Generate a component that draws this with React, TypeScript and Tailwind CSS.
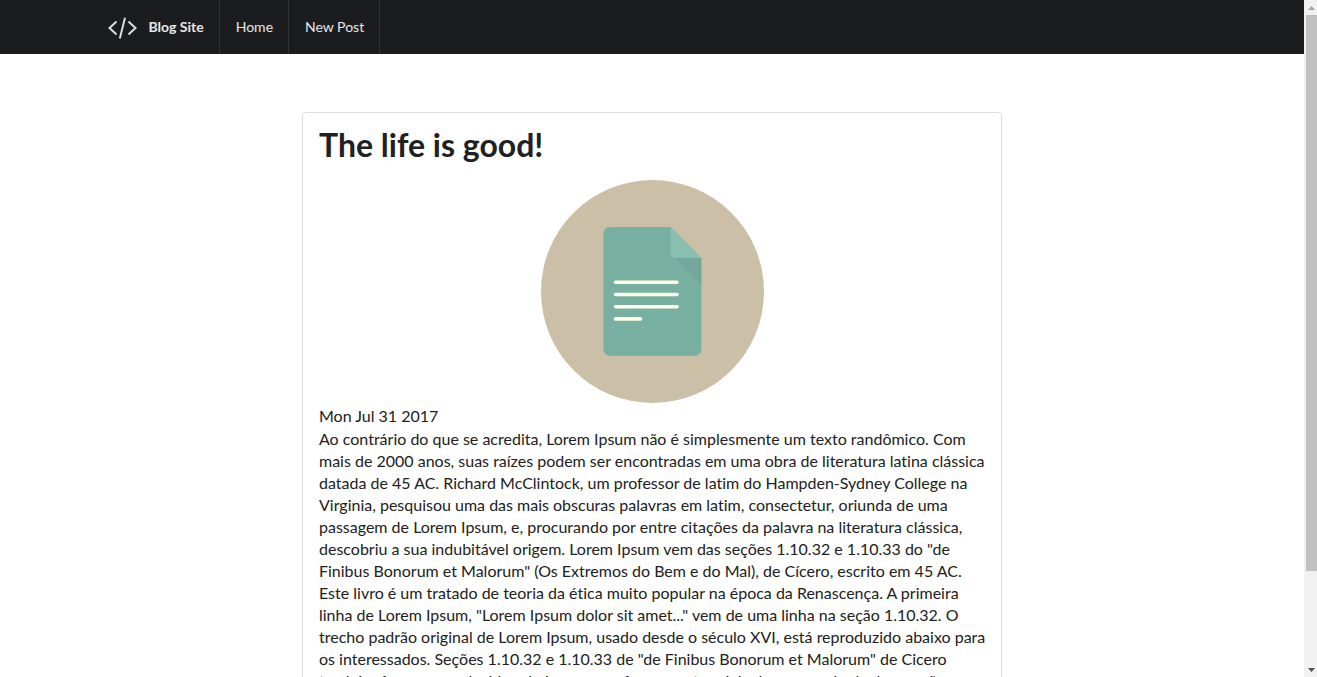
import React from "react";

function CodeLogo() {
  return (
    <svg viewBox="0 0 36 36" className="h-9 w-9" fill="none" stroke="#dcdcdc" strokeWidth="2" aria-hidden="true">
      <path d="M11.500 12.500 4.500 19l7 6.500M23.500 12.500l7 6.500-7 6.500M20 8.800l-5.200 20.700" />
    </svg>
  );
}

function NavItem({ children, bold = false }: { children: React.ReactNode; bold?: boolean }) {
  return (
    <a
      href="#"
      className={`flex items-center border-r border-[#323334] pr-[15px] pl-4 text-sm text-white/90 ${bold ? "font-bold" : "font-normal"}`}
    >
      {children}
    </a>
  );
}

function DocumentPicture() {
  return (
    <svg viewBox="-1 0 224 224" className="mx-auto block w-56 max-w-full" role="img" aria-label="Document">
      <circle cx="111.5" cy="111.5" r="111.5" fill="#cbbfa7" />
      <path d="M68.500 47H130l30.300 31v91.700a6 6 0 0 1-6 6H68.500a6 6 0 0 1-6-6V53a6 6 0 0 1 6-6Z" fill="#77b0a1" />
      <path d="M134 78h26.300v26.300Z" fill="#75a69b" />
      <path d="M129.500 47 160.300 78H135a5.500 5.500 0 0 1-5.500-5.500Z" fill="#8ac0b0" />
      <path d="M74.500 102.300H136M74.500 114.500H136M74.500 126.800H136M74.500 138.900h25" stroke="#fffde8" strokeWidth="3.600" strokeLinecap="round" />
    </svg>
  );
}

function ScrollRail() {
  return (
    <div className="flex w-[13px] shrink-0 flex-col bg-[#f1f1f1]" aria-hidden="true">
      <svg viewBox="0 0 13 15" className="h-[15px]">
        <path d="M4 10h7L7.500 6Z" fill="#a3a3a3" />
      </svg>
      <div className="flex flex-1 flex-col pl-[2px]">
        <div className="h-[86%] bg-[#c1c1c1]" />
      </div>
      <svg viewBox="0 0 13 15" className="h-[15px]">
        <path d="M4 6h7L7.500 10Z" fill="#505050" />
      </svg>
    </div>
  );
}

export default function App() {
  return (
    <div className="flex h-screen bg-white font-['Lato',sans-serif] text-[#212121] [font-variant-ligatures:no-common-ligatures]">
      <div className="flex min-w-0 flex-1 flex-col">
        <header className="bg-[#1b1c1d]">
          <nav className="mx-auto flex h-[54px] w-full max-w-[1127px]">
            <NavItem bold>
              <CodeLogo />
              <span className="ml-2">Blog Site</span>
            </NavItem>
            <NavItem>Home</NavItem>
            <NavItem>New Post</NavItem>
          </nav>
        </header>
        <main className="min-h-0 flex-1 overflow-y-auto px-4 py-[58px] [scrollbar-width:none]">
          <article className="mx-auto max-w-[700px] rounded border border-[#dcdcdc] py-4 pr-3 pl-4">
            <h1 className="mb-5 text-[32px] leading-[31px] font-bold">The life is good!</h1>
            <div className="pr-1">
              <DocumentPicture />
            </div>
            <time dateTime="2017-07-31" className="block text-base leading-6">
              Mon Jul 31 2017
            </time>
            <p className="text-base leading-[22px]">
              Ao contrário do que se acredita, Lorem Ipsum não é simplesmente um texto randômico. Com mais de 2000 anos,
              suas raízes podem ser encontradas em uma obra de literatura latina clássica datada de 45 AC. Richard
              McClintock, um professor de latim do Hampden-Sydney College na Virginia, pesquisou uma das mais obscuras
              palavras em latim, consectetur, oriunda de uma passagem de Lorem Ipsum, e, procurando por entre citações
              da palavra na literatura clássica, descobriu a sua indubitável origem. Lorem Ipsum vem das seções 1.10.32
              e 1.10.33 do "de Finibus Bonorum et Malorum" (Os Extremos do Bem e do Mal), de Cícero, escrito em 45 AC.
              Este livro é um tratado de teoria da ética muito popular na época da Renascença. A primeira linha de Lorem
              Ipsum, "Lorem Ipsum dolor sit amet..." vem de uma linha na seção 1.10.32. O trecho padrão original de
              Lorem Ipsum, usado desde o século XVI, está reproduzido abaixo para os interessados. Seções 1.10.32 e
              1.10.33 de "de Finibus Bonorum et Malorum" de Cicero também foram reproduzidas abaixo em sua forma exata
              original, acompanhada das versões para o inglês da tradução feita por H. Rackham em 1914.
            </p>
          </article>
        </main>
      </div>
      <ScrollRail />
    </div>
  );
}
